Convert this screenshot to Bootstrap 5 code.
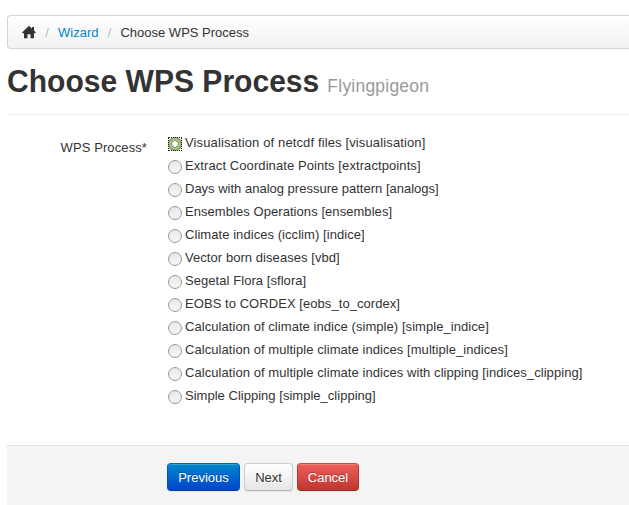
<!DOCTYPE html>
<html lang="en">
<head>
<meta charset="utf-8">
<title>Choose WPS Process</title>
<link href="https://cdn.jsdelivr.net/npm/bootstrap@5.3.0/dist/css/bootstrap.min.css" rel="stylesheet">
<style>
body{font:13px/20px "Liberation Sans",Arial,sans-serif;color:#333;background:#fff;overflow:hidden}
.page{margin-left:7px;padding-top:15px;height:505px}
.trail{height:34px;border:1px solid #d4d4d4;border-right:0;border-radius:4px 0 0 4px;background:linear-gradient(#fff,#f2f2f2);padding:1px 0 0 14px}
.trail a{color:#08c}
.trail .sep{color:#bbb;width:22px;text-align:center}
.home{width:14px;height:14px;display:block;margin-top:-2px}
.heading{height:66px;border-bottom:1px solid #eee;padding-top:12px}
.heading h1{font-size:31.5px;line-height:40px;font-weight:700;color:#333}
.heading .main{display:inline-block;transform:scaleX(.954);transform-origin:left;margin-right:-15px}
.heading .sub{font-size:17.5px;font-weight:400;color:#999;margin-left:8px;letter-spacing:.22px}
.fields{height:330px;padding-top:16px}
.caption{width:140px;padding-top:7px;letter-spacing:.1px}
.choices{margin-left:21px}
.choice{height:23px;line-height:23px;letter-spacing:.06px}
.choice:nth-child(1){letter-spacing:.13px}
.choice:nth-child(2){letter-spacing:.09px}
.choice:nth-child(3){letter-spacing:0}
.choice:nth-child(12){letter-spacing:.02px}
.choice input{appearance:none;width:14px;height:14px;border:1px solid #999;border-radius:50%;background:linear-gradient(#e8e8e8,#f6f6f6);margin:2px 3px 0 0;flex:none}
.choice input:checked{border:1px dotted #222;border-radius:0;background:radial-gradient(circle,#fff 0 2.5px,#71885c 3.2px,#a3c783 4px 5.3px,#71885c 6.3px,#c5d2ba 7px,transparent 7.5px) border-box}
.actions{height:60px;background:#f4f4f4;border-top:1px solid #e2e2e2;padding:17px 0 0 160px;gap:4px}
.actions .btn{height:28px;padding:0;font-size:13px;line-height:27px;border-radius:4px;box-shadow:inset 0 1px 0 rgba(255,255,255,.2),0 1px 2px rgba(0,0,0,.05)}
.btn-prev,.btn-stop{color:#fff;text-shadow:0 -1px 0 rgba(0,0,0,.25)}
.btn-prev{background:linear-gradient(#08c,#04c);border-color:#0067b5 #0055bb #003f9c;width:73px}
.btn-next{color:#333;background:linear-gradient(#fff,#e6e6e6);border-color:#ccc #ccc #b3b3b3;text-shadow:0 1px 1px rgba(255,255,255,.75);width:49px}
.btn-stop{background:linear-gradient(#ee5f5b,#bd362f);border-color:#c84843 #bd362f #9b2a25;width:62px}
</style>
<script src="https://cdn.jsdelivr.net/npm/bootstrap@5.3.0/dist/js/bootstrap.bundle.min.js"></script>
</head>
<body>
<div class="page d-flex flex-column">
<nav class="trail d-flex align-items-center">
<svg class="home" viewBox="0 0 14 14"><path fill="#333" d="M7 .7 13.700 7.300V8.300H12V13.300H8.500V9.300H5.500V13.300H2V8.300H.3V7.300ZM10 2H12V5.500H10Z"/></svg>
<span class="sep">/</span><a class="text-decoration-none" href="#">Wizard</a><span class="sep">/</span><span>Choose WPS Process</span>
</nav>
<header class="heading"><h1 class="m-0 text-nowrap"><span class="main">Choose WPS Process</span><span class="sub">Flyingpigeon</span></h1></header>
<form class="fields d-flex">
<div class="caption text-end">WPS Process*</div>
<div class="choices text-nowrap">
<div class="choice d-flex align-items-center"><input type="radio" name="p" id="p1" checked><label for="p1">Visualisation of netcdf files [visualisation]</label></div>
<div class="choice d-flex align-items-center"><input type="radio" name="p" id="p2"><label for="p2">Extract Coordinate Points [extractpoints]</label></div>
<div class="choice d-flex align-items-center"><input type="radio" name="p" id="p3"><label for="p3">Days with analog pressure pattern [analogs]</label></div>
<div class="choice d-flex align-items-center"><input type="radio" name="p" id="p4"><label for="p4">Ensembles Operations [ensembles]</label></div>
<div class="choice d-flex align-items-center"><input type="radio" name="p" id="p5"><label for="p5">Climate indices (icclim) [indice]</label></div>
<div class="choice d-flex align-items-center"><input type="radio" name="p" id="p6"><label for="p6">Vector born diseases [vbd]</label></div>
<div class="choice d-flex align-items-center"><input type="radio" name="p" id="p7"><label for="p7">Segetal Flora [sflora]</label></div>
<div class="choice d-flex align-items-center"><input type="radio" name="p" id="p8"><label for="p8">EOBS to CORDEX [eobs_to_cordex]</label></div>
<div class="choice d-flex align-items-center"><input type="radio" name="p" id="p9"><label for="p9">Calculation of climate indice (simple) [simple_indice]</label></div>
<div class="choice d-flex align-items-center"><input type="radio" name="p" id="p10"><label for="p10">Calculation of multiple climate indices [multiple_indices]</label></div>
<div class="choice d-flex align-items-center"><input type="radio" name="p" id="p11"><label for="p11">Calculation of multiple climate indices with clipping [indices_clipping]</label></div>
<div class="choice d-flex align-items-center"><input type="radio" name="p" id="p12"><label for="p12">Simple Clipping [simple_clipping]</label></div>
</div>
</form>
<footer class="actions d-flex">
<button type="button" class="btn btn-prev">Previous</button>
<button type="button" class="btn btn-next">Next</button>
<button type="button" class="btn btn-stop">Cancel</button>
</footer>
</div>
</body>
</html>
